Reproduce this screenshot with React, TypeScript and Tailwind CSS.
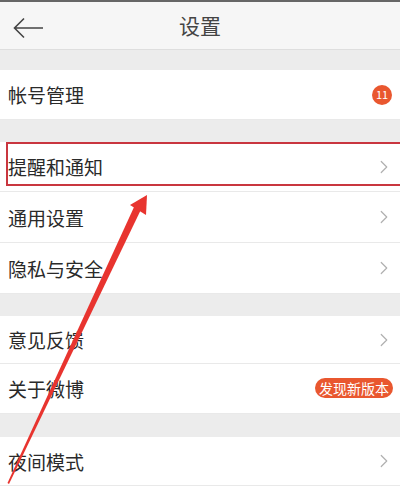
import { ChevronRight } from 'lucide-react';

type Row = { label: string; h: string; right?: 'chevron' | 'count' | 'update'; boxed?: boolean };

const groups: { gap: string; rows: Row[] }[] = [
  { gap: 'h-[20px]', rows: [{ label: '帐号管理', h: 'h-[50px]', right: 'count' }] },
  {
    gap: 'h-[22px]',
    rows: [
      { label: '提醒和通知', h: 'h-[50px]', right: 'chevron', boxed: true },
      { label: '通用设置', h: 'h-[51px]', right: 'chevron' },
      { label: '隐私与安全', h: 'h-[51px]', right: 'chevron' },
    ],
  },
  {
    gap: 'h-[22px]',
    rows: [
      { label: '意见反馈', h: 'h-[48px]', right: 'chevron' },
      { label: '关于微博', h: 'h-[50px]', right: 'update' },
    ],
  },
  {
    gap: 'h-[23px]',
    rows: [
      { label: '夜间模式', h: 'h-[49px]', right: 'chevron' },
      { label: '', h: 'h-[50px]' },
    ],
  },
];

function SettingRow({ row }: { row: Row }) {
  return (
    <div className={`relative flex items-center justify-between bg-white border-b border-[#e9e9e9] pl-2 pr-[5px] ${row.h}`}>
      <span className="text-[19px] text-[#2a2a2a] leading-none">{row.label}</span>
      {row.right === 'chevron' && <ChevronRight className="w-[22px] h-[22px] text-[#b0b0b0]" strokeWidth={1.3} />}
      {row.right === 'count' && (
        <span className="mr-[3px] w-[20px] h-[20px] rounded-full bg-[#e9572f] text-white text-[11px] flex items-center justify-center">
          11
        </span>
      )}
      {row.right === 'update' && (
        <span className="mr-[2px] h-[20px] px-[4px] rounded-full bg-[#e9572f] text-white text-[14px] leading-none flex items-center -mt-[2px]">
          发现新版本
        </span>
      )}
      {row.boxed && (
        <div className="absolute left-[6px] -right-[4px] top-0 h-[44px] border-2 border-[#c9363f] pointer-events-none" />
      )}
    </div>
  );
}

export default function App() {
  return (
    <div
      className="relative w-[400px] h-[500px] overflow-hidden bg-[#ececec]"
      style={{ fontFamily: '"Noto Sans CJK SC", "Noto Sans", sans-serif' }}
    >
      {/* 顶部标题栏 */}
      <div className="h-[2px] bg-[#666]" />
      <div className="relative h-[48px] bg-[#f6f6f6] border-b border-[#dedede] flex items-center justify-center">
        <svg className="absolute left-[13px] top-[15px]" width="31" height="22" viewBox="0 0 31 22" fill="none">
          <path d="M1.5 11H30M11 1.5L1.5 11L11 20.5" stroke="#444" strokeWidth="1.6" />
        </svg>
        <span className="text-[21px] text-[#444] leading-none">设置</span>
      </div>

      {groups.map((g, i) => (
        <div key={i}>
          <div className={g.gap} />
          {g.rows.map((r, j) => (
            <SettingRow key={j} row={r} />
          ))}
        </div>
      ))}

      {/* 标注箭头 */}
      <svg className="absolute left-0 top-0 pointer-events-none" width="400" height="500" viewBox="0 0 400 500">
        <polygon points="134.5,206 141,209.5 9,484 7.5,483" fill="#e8342f" />
        <polygon points="147,195 130,205 146,215" fill="#e8342f" />
      </svg>
    </div>
  );
}
